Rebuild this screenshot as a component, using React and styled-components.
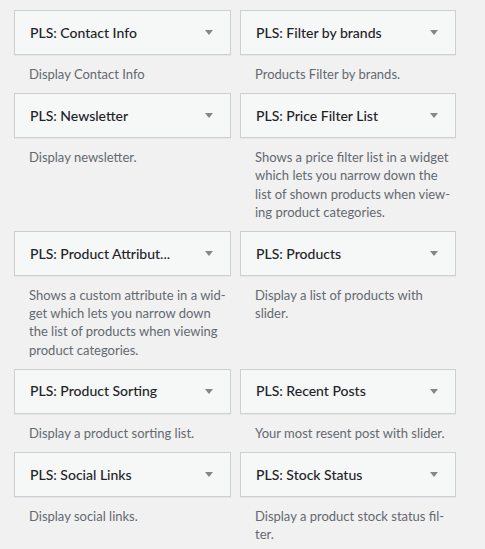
import styled, { createGlobalStyle } from 'styled-components';

const GlobalStyle = createGlobalStyle`
  html, body {
    margin: 0;
    height: 100%;
    background: #f1f1f1;
    overflow: hidden;
  }
  body {
    font-family: Lato, 'Open Sans', sans-serif;
    color: #23282d;
  }
`;

const widgets = [
  { title: 'PLS: Contact Info', lines: ['Display Contact Info'] },
  { title: 'PLS: Filter by brands', lines: ['Products Filter by brands.'] },
  { title: 'PLS: Newsletter', lines: ['Display newsletter.'] },
  {
    title: 'PLS: Price Filter List',
    lines: [
      'Shows a price filter list in a widget',
      'which lets you narrow down the',
      'list of shown products when view-',
      'ing product categories.',
    ],
  },
  {
    title: 'PLS: Product Attribut...',
    lines: [
      'Shows a custom attribute in a wid-',
      'get which lets you narrow down',
      'the list of products when viewing',
      'product categories.',
    ],
  },
  { title: 'PLS: Products', lines: ['Display a list of products with', 'slider.'] },
  { title: 'PLS: Product Sorting', lines: ['Display a product sorting list.'] },
  { title: 'PLS: Recent Posts', lines: ['Your most resent post with slider.'] },
  { title: 'PLS: Social Links', lines: ['Display social links.'] },
  { title: 'PLS: Stock Status', lines: ['Display a product stock status fil-', 'ter.'] },
];

const List = styled.div`
  display: grid;
  grid-template-columns: 217px 216px;
  column-gap: 9px;
  padding: 10px 0 0 14px;
`;

const Widget = styled.div`
  display: flex;
  flex-direction: column;
`;

const WidgetTop = styled.div`
  box-sizing: border-box;
  height: 45px;
  display: flex;
  align-items: center;
  justify-content: space-between;
  padding: 0 17px 0 15px;
  background: #f6f7f7;
  border: 1px solid #ccd0d4;
  box-shadow: 0 1px 1px rgba(0, 0, 0, 0.04);
`;

const Title = styled.h3`
  margin: 0;
  font-size: 14px;
  font-weight: 500;
  line-height: 1;
  white-space: nowrap;
  color: #1d2327;
`;

const Toggle = styled.span`
  width: 0;
  height: 0;
  border-left: 4px solid transparent;
  border-right: 4px solid transparent;
  border-top: 5px solid #82878c;
`;

const Description = styled.div`
  padding: 10px 15px;
  font-size: 13px;
  line-height: 18.2px;
  color: #646970;
`;

const Line = styled.div`
  white-space: nowrap;
`;

export default function App() {
  return (
    <>
      <GlobalStyle />
      <List>
        {widgets.map((w) => (
          <Widget key={w.title}>
            <WidgetTop>
              <Title>{w.title}</Title>
              <Toggle />
            </WidgetTop>
            <Description>
              {w.lines.map((l) => (
                <Line key={l}>{l}</Line>
              ))}
            </Description>
          </Widget>
        ))}
      </List>
    </>
  );
}
